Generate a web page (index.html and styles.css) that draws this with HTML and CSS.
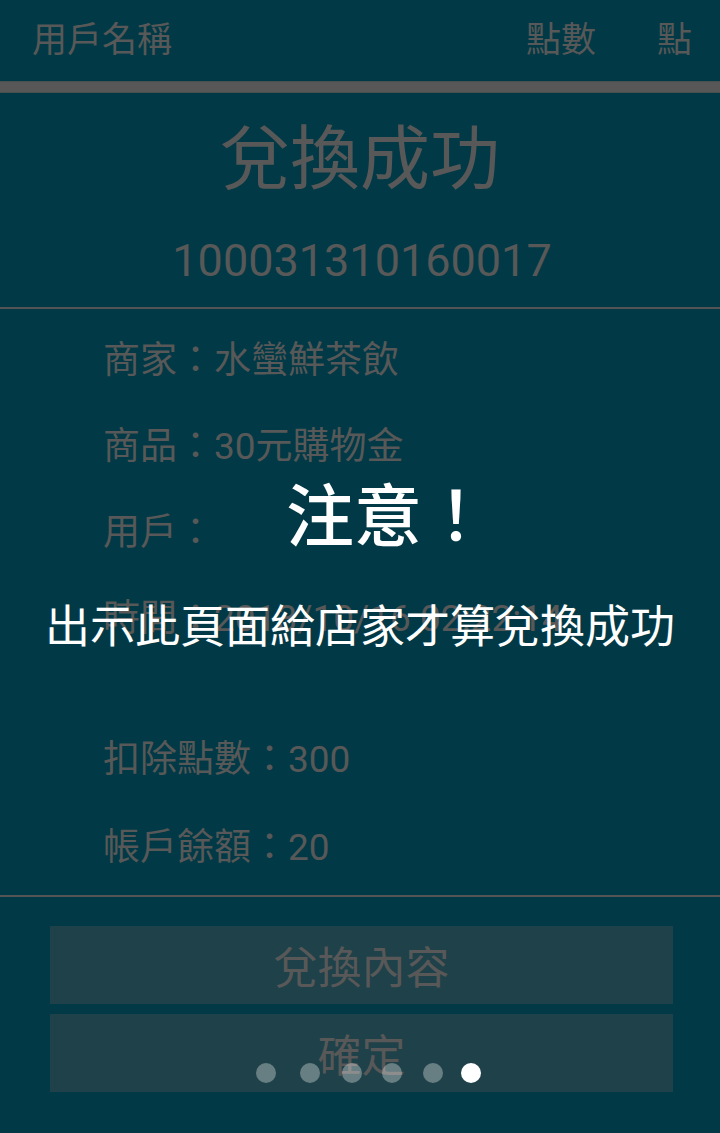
FILE: index.html
```html
<!DOCTYPE html>
<html lang="zh-Hant">
<head>
<meta charset="utf-8">
<title>兌換成功</title>
<link rel="stylesheet" href="styles.css">
</head>
<body>
<div class="screen">
  <header class="topbar">
    <span class="user">用戶名稱</span>
    <span class="points">點數</span>
    <span class="unit">點</span>
  </header>
  <div class="thickbar"></div>

  <section class="hero">
    <div class="title">兌換成功</div>
    <div class="serial">100031310160017</div>
  </section>
  <div class="rule"></div>

  <section class="info">
    <div class="row">商家：水蠻鮮茶飲</div>
    <div class="row">商品：30元購物金</div>
    <div class="row">用戶：</div>
    <div class="row">時間：2013/10/16 02:22:14</div>
    <div class="row row-gap">扣除點數：300</div>
    <div class="row row-last">帳戶餘額：20</div>
  </section>
  <div class="rule"></div>

  <section class="actions">
    <div class="btn">兌換內容</div>
    <div class="btn">確定</div>
  </section>

  <div class="notice">
    <div class="notice-title">注意！</div>
    <div class="notice-msg">出示此頁面給店家才算兌換成功</div>
  </div>

  <div class="dots">
    <span class="dot"></span>
    <span class="dot"></span>
    <span class="dot"></span>
    <span class="dot"></span>
    <span class="dot"></span>
    <span class="dot active"></span>
  </div>
</div>
</body>
</html>
```

FILE: styles.css
```css
* { box-sizing: border-box; margin: 0; padding: 0; }

html, body {
  width: 720px;
  height: 1133px;
  background: #013a46;
  overflow: hidden;
}

body {
  font-family: Roboto, "Noto Sans CJK TC", sans-serif;
  color: #585858;
}

.screen {
  position: relative;
  width: 720px;
  height: 1133px;
  background: #013a46;
}

.topbar {
  display: flex;
  align-items: center;
  height: 81px;
  padding: 0 28px 0 32px;
  font-size: 35px;
  line-height: 81px;
}

.topbar .user { flex: 1; }
.topbar .points { margin-right: 61px; }

.thickbar {
  height: 12px;
  background: #575757;
  border-top: 1px solid #4a4f50;
  border-bottom: 1px solid #4a4f50;
}

.hero {
  display: flex;
  flex-direction: column;
  align-items: center;
  padding: 27px 0 16px;
}

.title {
  font-size: 70px;
  line-height: 80px;
  height: 80px;
}

.serial {
  margin-top: 31px;
  font-size: 45px;
  line-height: 60px;
  height: 60px;
  padding-left: 4px;
}

.rule {
  height: 2px;
  background: #545454;
}

.info {
  display: flex;
  flex-direction: column;
  padding: 9px 0 4px 103px;
}

.row {
  font-size: 37px;
  line-height: 86px;
  height: 86px;
  white-space: nowrap;
}

.row-gap { margin-top: 55px; }
.row-last { margin-top: 2px; }

.actions {
  display: flex;
  flex-direction: column;
  gap: 10px;
  padding: 29px 47px 0 50px;
}

.btn {
  height: 78px;
  background: #1f4149;
  display: flex;
  align-items: center;
  justify-content: center;
  font-size: 44px;
  color: #585858;
}

.notice {
  position: absolute;
  left: 0;
  top: 478px;
  width: 720px;
  display: flex;
  flex-direction: column;
  align-items: center;
  color: #ffffff;
}

.notice-title {
  font-size: 68px;
  line-height: 80px;
  font-weight: 500;
  padding-left: 56px;
}

.notice-msg {
  margin-top: 45px;
  font-size: 45px;
  line-height: 50px;
  font-weight: 400;
}

.dots {
  position: absolute;
  left: 256px;
  top: 1063px;
  display: flex;
}

.dot {
  width: 20px;
  height: 20px;
  border-radius: 50%;
  background: rgba(255, 255, 255, 0.32);
}

.dot:nth-child(1) { margin-right: 24px; }
.dot:nth-child(2) { margin-right: 22px; }
.dot:nth-child(3) { margin-right: 20px; }
.dot:nth-child(4) { margin-right: 21px; }
.dot:nth-child(5) { margin-right: 18px; }

.dot.active { background: #ffffff; }
```
